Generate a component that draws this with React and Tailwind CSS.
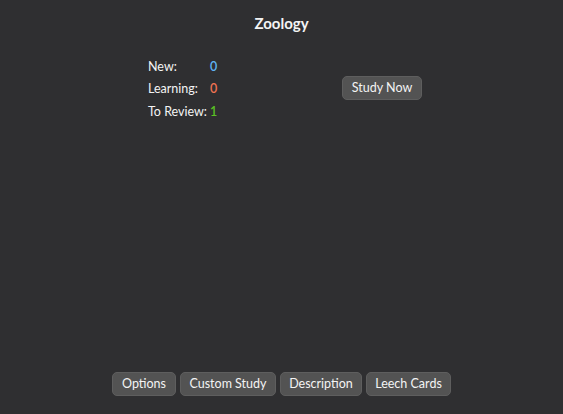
import React from "react";

const font = { fontFamily: 'Lato, "Liberation Sans", sans-serif' };

function Btn({ children, className = "" }) {
  return (
    <button
      type="button"
      className={
        "h-6 whitespace-nowrap rounded-[5px] border border-[#5e5e5e] bg-[#535353] px-0 text-[12.5px] leading-none text-[#f4f4f4] " +
        className
      }
    >
      {children}
    </button>
  );
}

export default function App() {
  const stats = [
    { label: "New:", value: "0", color: "text-[#5fb4f4]" },
    { label: "Learning:", value: "0", color: "text-[#f07352]" },
    { label: "To Review:", value: "1", color: "text-[#5ac223]" },
  ];

  return (
    <main
      className="flex h-[414px] w-full flex-col bg-[#2f2f31] text-[#f4f4f4]"
      style={font}
    >
      {/* title */}
      <h1 className="pt-[13px] text-center text-[15px] font-bold leading-5">Zoology</h1>

      {/* counts + study button */}
      <div className="mt-[23px] flex items-center pl-[148px]">
        <div className="flex w-[194px] flex-col">
          {stats.map((s) => (
            <div key={s.label} className="flex h-[22.5px] items-center whitespace-nowrap text-[12.5px]">
              <span className="w-[62px]">{s.label}</span>
              <span className={"font-semibold " + s.color}>{s.value}</span>
            </div>
          ))}
        </div>
        <Btn className="mb-[3px] w-[80px]">Study Now</Btn>
      </div>

      {/* bottom buttons */}
      <div className="mt-auto flex justify-center gap-[4px] pb-[18px]">
        <Btn className="w-[64px]">Options</Btn>
        <Btn className="w-[96px]">Custom Study</Btn>
        <Btn className="w-[82px]">Description</Btn>
        <Btn className="w-[85px]">Leech Cards</Btn>
      </div>
    </main>
  );
}
